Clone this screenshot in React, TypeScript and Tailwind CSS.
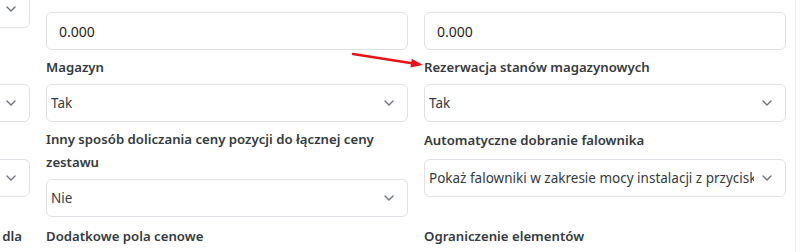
const font = { fontFamily: '"Noto Sans", "Open Sans", sans-serif' };

function Label({ children, className = '' }: { children: React.ReactNode; className?: string }) {
  return <div className={`text-[13.2px] leading-[23px] font-semibold text-[#343a40] ${className}`}>{children}</div>;
}

function Chevron() {
  return (
    <svg width="10" height="6" viewBox="0 0 10 6" className="shrink-0">
      <path d="M1 1 L5 5 L9 1" fill="none" stroke="#6c757d" strokeWidth="1.4" strokeLinecap="round" strokeLinejoin="round" />
    </svg>
  );
}

function Select({ value, className = '' }: { value?: string; className?: string }) {
  return (
    <div className={`h-[38px] border border-[#dee2e6] rounded-[6px] bg-white flex items-center pl-[4px] pr-[13px] ${className}`}>
      <div className="flex-1 min-w-0 pr-[8px]">
        <div className="overflow-hidden whitespace-nowrap text-[13.5px] text-[#343a40]">{value}</div>
      </div>
      <Chevron />
    </div>
  );
}

function Input({ value, className = '' }: { value: string; className?: string }) {
  return (
    <div className={`h-[38px] border border-[#dee2e6] rounded-[6px] bg-white flex items-center px-3 text-[14px] text-[#212529] ${className}`}>
      {value}
    </div>
  );
}

// the first column is cut off by the viewport; only its right edge shows
function Clip({ children }: { children: React.ReactNode }) {
  return (
    <div className="overflow-hidden">
      <div className="flex justify-end">
        <div className="w-[362px] shrink-0">{children}</div>
      </div>
    </div>
  );
}

export default function App() {
  return (
    <div className="w-[800px] h-[252px] overflow-hidden bg-white relative" style={font}>
      <div className="w-[796px] h-full border-r border-[#ececec]">
        {/* Row A */}
        <div className="grid grid-cols-[30px_362px_362px] gap-x-4 h-[50px]">
          <Clip><Select className="-mt-[10px]" /></Clip>
          <Input value="0.000" className="mt-[12px]" />
          <Input value="0.000" className="mt-[12px]" />
        </div>

        {/* Row B */}
        <div className="grid grid-cols-[30px_362px_362px] gap-x-4 mt-[6px]">
          <Clip>
            <Label className="mb-[5px]">&nbsp;</Label>
            <Select />
          </Clip>
          <div>
            <Label className="mb-[5px]">Magazyn</Label>
            <Select value="Tak" />
          </div>
          <div>
            <Label className="mb-[5px]">Rezerwacja stanów magazynowych</Label>
            <Select value="Tak" />
          </div>
        </div>

        {/* Row C */}
        <div className="grid grid-cols-[30px_362px_362px] gap-x-4 mt-[6px]">
          <Clip>
            <Label className="pt-[1px] mb-[7px]">&nbsp;</Label>
            <Select />
          </Clip>
          <div>
            <Label className="mb-[5px]">Inny sposób doliczania ceny pozycji do łącznej ceny zestawu</Label>
            <Select value="Nie" />
          </div>
          <div>
            <Label className="pt-[1px] mb-[7px]">Automatyczne dobranie falownika</Label>
            <Select value="Pokaż falowniki w zakresie mocy instalacji z przyciskiem wyboru" />
          </div>
        </div>

        {/* Row D */}
        <div className="grid grid-cols-[30px_362px_362px] gap-x-4 mt-[8px]">
          <Clip>
            <Label className="text-right pr-[8px]">Pokaż dodatkowe ceny dla</Label>
          </Clip>
          <Label>Dodatkowe pola cenowe</Label>
          <Label>Ograniczenie elementów</Label>
        </div>
      </div>

      {/* annotation arrow */}
      <svg className="absolute left-[350px] top-[48px]" width="76" height="22" viewBox="0 0 76 22">
        <line x1="3" y1="6" x2="62" y2="15.2" stroke="#e3151a" strokeWidth="2.4" strokeLinecap="round" />
        <polygon points="73,17 60.4,19.6 61.8,10.7" fill="#e3151a" />
      </svg>
    </div>
  );
}
